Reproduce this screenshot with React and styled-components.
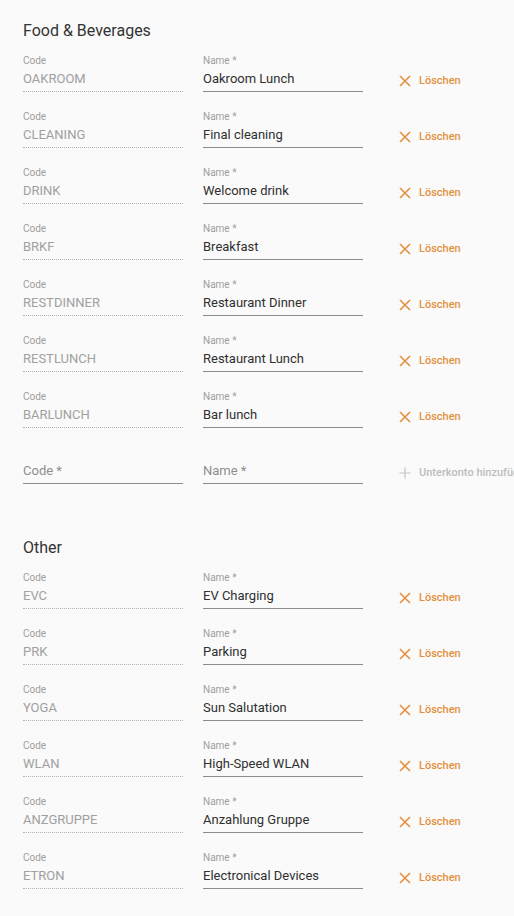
import React from "react";
import styled, { createGlobalStyle } from "styled-components";

const Global = createGlobalStyle`
  html, body { margin: 0; padding: 0; background: #fafafa; overflow-x: hidden; }
  body { font-family: Roboto, "Liberation Sans", Arial, sans-serif; }
  * { box-sizing: border-box; }
`;

const Page = styled.div`
  display: flex;
  flex-direction: column;
  gap: 52px;
  padding: 19px 0 30px 23px;
  width: 514px;
  overflow: hidden;
`;

const Section = styled.section`
  display: flex;
  flex-direction: column;
  gap: 19px;
`;

const Heading = styled.h2`
  margin: 0 0 -7px;
  font-size: 16px;
  line-height: 24px;
  font-weight: 400;
  color: #333;
`;

const Row = styled.div`
  display: flex;
  align-items: flex-end;
  gap: 20px;
  white-space: nowrap;
`;

const Field = styled.div`
  width: 160px;
  flex-shrink: 0;
  display: flex;
  flex-direction: column;
`;

const Label = styled.div`
  font-size: 10px;
  line-height: 12px;
  height: 12px;
  color: #9e9e9e;
`;

const Value = styled.div`
  height: 25px;
  font-size: 13px;
  line-height: 24px;
  color: ${(p) => (p.$muted ? "#a0a0a0" : p.$placeholder ? "#8d8d8d" : "#2f2f2f")};
  border-bottom: 1px ${(p) => (p.$dotted ? "dotted #b0b0b0" : "solid #8c8c8c")};
`;

const Action = styled.button`
  margin-left: 16px;
  flex-shrink: 0;
  height: 25px;
  display: flex;
  align-items: center;
  gap: 8px;
  padding: 2px 0 0;
  border: 0;
  background: none;
  font-family: inherit;
  font-size: 11px;
  font-weight: 500;
  color: ${(p) => (p.$add ? "#bdbdbd" : "#e3903c")};
  cursor: pointer;
  white-space: nowrap;
`;

const CloseIcon = () => (
  <svg width="12" height="12" viewBox="0 0 12 12">
    <path d="M1 1L11 11M11 1L1 11" stroke="#e3903c" strokeWidth="1.6" fill="none" />
  </svg>
);

const PlusIcon = () => (
  <svg width="12" height="12" viewBox="0 0 12 12">
    <path d="M6 0.5V11.5M0.5 6H11.5" stroke="#c4c4c4" strokeWidth="1.2" fill="none" />
  </svg>
);

const sections = [
  {
    title: "Food & Beverages",
    items: [
      ["OAKROOM", "Oakroom Lunch"],
      ["CLEANING", "Final cleaning"],
      ["DRINK", "Welcome drink"],
      ["BRKF", "Breakfast"],
      ["RESTDINNER", "Restaurant Dinner"],
      ["RESTLUNCH", "Restaurant Lunch"],
      ["BARLUNCH", "Bar lunch"],
    ],
    add: true,
  },
  {
    title: "Other",
    items: [
      ["EVC", "EV Charging"],
      ["PRK", "Parking"],
      ["YOGA", "Sun Salutation"],
      ["WLAN", "High-Speed WLAN"],
      ["ANZGRUPPE", "Anzahlung Gruppe"],
      ["ETRON", "Electronical Devices"],
    ],
  },
];

export default function App() {
  return (
    <>
      <Global />
      <Page>
        {sections.map((s) => (
          <Section key={s.title}>
            <Heading>{s.title}</Heading>
            {s.items.map(([code, name]) => (
              <Row key={code}>
                <Field>
                  <Label>Code</Label>
                  <Value $muted $dotted>{code}</Value>
                </Field>
                <Field>
                  <Label>Name *</Label>
                  <Value>{name}</Value>
                </Field>
                <Action>
                  <CloseIcon />
                  Löschen
                </Action>
              </Row>
            ))}
            {s.add && (
              <Row>
                <Field>
                  <Label />
                  <Value $placeholder>Code *</Value>
                </Field>
                <Field>
                  <Label />
                  <Value $placeholder>Name *</Value>
                </Field>
                <Action $add>
                  <PlusIcon />
                  Unterkonto hinzufügen
                </Action>
              </Row>
            )}
          </Section>
        ))}
      </Page>
    </>
  );
}
